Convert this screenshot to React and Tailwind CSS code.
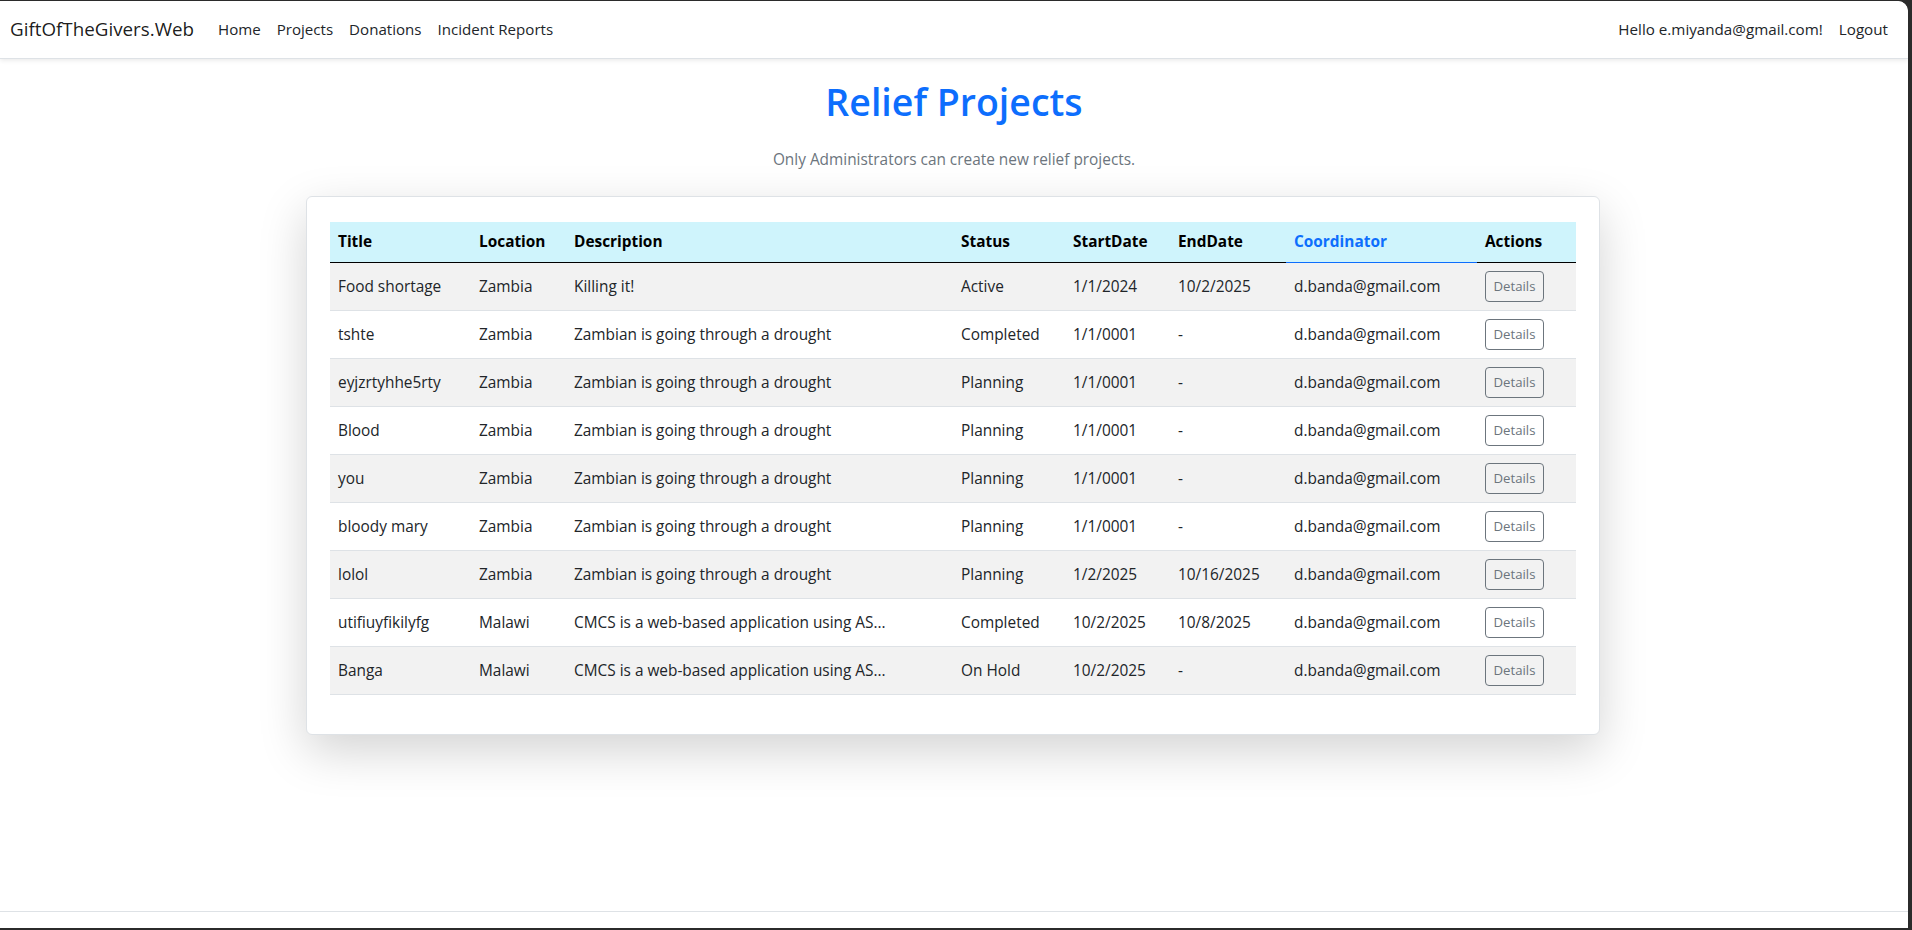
import React from "react";

const projects = [
  {title: "Food shortage", location: "Zambia", description: "Killing it!", status: "Active", start: "1/1/2024", end: "10/2/2025"},
  {title: "tshte", location: "Zambia", description: "Zambian is going through a drought", status: "Completed", start: "1/1/0001", end: "-"},
  {title: "eyjzrtyhhe5rty", location: "Zambia", description: "Zambian is going through a drought", status: "Planning", start: "1/1/0001", end: "-"},
  {title: "Blood", location: "Zambia", description: "Zambian is going through a drought", status: "Planning", start: "1/1/0001", end: "-"},
  {title: "you", location: "Zambia", description: "Zambian is going through a drought", status: "Planning", start: "1/1/0001", end: "-"},
  {title: "bloody mary", location: "Zambia", description: "Zambian is going through a drought", status: "Planning", start: "1/1/0001", end: "-"},
  {title: "lolol", location: "Zambia", description: "Zambian is going through a drought", status: "Planning", start: "1/2/2025", end: "10/16/2025"},
  {title: "utifiuyfikilyfg", location: "Malawi", description: "CMCS is a web-based application using AS...", status: "Completed", start: "10/2/2025", end: "10/8/2025"},
  {title: "Banga", location: "Malawi", description: "CMCS is a web-based application using AS...", status: "On Hold", start: "10/2/2025", end: "-"}
];

const columns = [
  {label: "Title", width: "w-[141px]"},
  {label: "Location", width: "w-[95px]"},
  {label: "Description", width: "w-[387px]"},
  {label: "Status", width: "w-[112px]"},
  {label: "StartDate", width: "w-[105px]"},
  {label: "EndDate", width: "w-[116px]"},
  {label: "Coordinator", width: "w-[191px]", active: true},
  {label: "Actions", width: "w-[99px]"}
];

const navLinks = ["Home", "Projects", "Donations", "Incident Reports"];

const Navbar = () => (
  <nav className="h-[58px] shrink-0 bg-white border-b border-[#dee2e6] shadow-[0_2px_4px_rgba(0,0,0,0.075)] flex items-center justify-between pl-[10px] pr-[12px] rounded-tr-[10px]">
    <div className="flex items-center">
      <span className="text-[18.8px] text-[#000000e6] mr-[16px]">GiftOfTheGivers.Web</span>
      {navLinks.map((link) => (
        <a key={link} className="px-[8px] text-[15.1px] text-[#212529]">{link}</a>
      ))}
    </div>
    <div className="flex items-center">
      <a className="px-[8px] text-[15.2px] text-[#212529]">Hello e.miyanda@gmail.com!</a>
      <a className="px-[8px] text-[15.2px] text-[#212529]">Logout</a>
    </div>
  </nav>
);

const ProjectsTable = () => (
  <table className="w-full border-collapse table-fixed text-[15.4px]">
    <thead>
      <tr className="bg-[#cff4fc]">
        {columns.map((col) => (
          <th
            key={col.label}
            className={`${col.width} text-left font-bold px-[8px] py-[8px] leading-[24px] border-b ${col.active ? "text-[#0d6efd] border-[#0d6efd]" : "text-black border-black"}`}
          >
            {col.label}
          </th>
        ))}
      </tr>
    </thead>
    <tbody>
      {projects.map((p, index) => (
        <tr key={index} className={`${index % 2 === 0 ? "bg-[#f2f2f2]" : "bg-white"} border-b border-[#dee2e6] text-[#212529]`}>
          <td className="px-[8px] h-[48px] leading-[24px]">{p.title}</td>
          <td className="px-[8px] leading-[24px]">{p.location}</td>
          <td className="px-[8px] leading-[24px]">{p.description}</td>
          <td className="px-[8px] leading-[24px]">{p.status}</td>
          <td className="px-[8px] leading-[24px]">{p.start}</td>
          <td className="px-[8px] leading-[24px]">{p.end}</td>
          <td className="px-[8px] leading-[24px]">d.banda@gmail.com</td>
          <td className="px-[8px]">
            <button className="h-[31px] w-[59px] text-[13.2px] leading-[21px] text-[#6c757d] border border-[#6c757d] rounded-[4px] bg-transparent">
              Details
            </button>
          </td>
        </tr>
      ))}
    </tbody>
  </table>
);

export default function App() {
  return (
    <div className="w-full h-[930px] bg-[#2b2b2b] pt-[1px] pr-[4px] pb-[2px] font-['Open_Sans',sans-serif]">
      <div className="h-full bg-white rounded-tr-[10px] flex flex-col overflow-hidden">
        <Navbar />

        <main className="flex-1">
          <div className="w-[1296px] mx-auto">
            <h1 className="mt-[19px] text-center text-[37.5px] leading-[48px] font-semibold text-[#0d6efd]">Relief Projects</h1>
            <p className="mt-[22px] text-center text-[15.4px] leading-[24px] text-[#6c757d]">
              Only Administrators can create new relief projects.
            </p>

            <div className="mt-[24px] w-[1294px] bg-white border border-[#dee2e6] rounded-[6px] shadow-[0_16px_48px_rgba(0,0,0,0.175)] px-[23px] pt-[25px] pb-[39px]">
              <ProjectsTable />
            </div>
          </div>
        </main>

        <footer className="h-[17px] shrink-0 border-t border-[#dee2e6]"></footer>
      </div>
    </div>
  );
}
